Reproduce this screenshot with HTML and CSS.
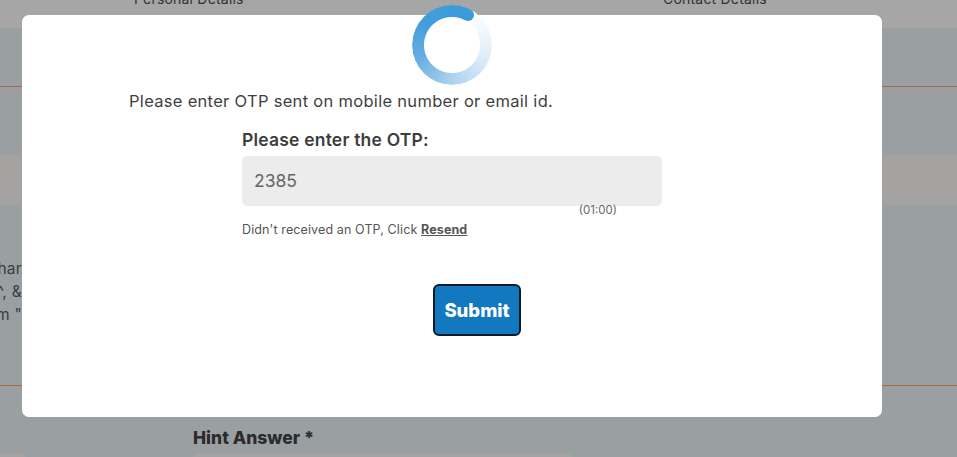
FILE: index.html
```html
<!DOCTYPE html>
<html lang="en">
<head>
<meta charset="utf-8">
<title>OTP verification</title>
<link rel="stylesheet" href="styles.css">
</head>
<body>
<div class="page">
  <div class="tabs">
    <span class="tab tab-personal">Personal Details</span>
    <span class="tab tab-contact">Contact Details</span>
  </div>
  <div class="strip"></div>
  <div class="rule"></div>
  <div class="gap-a"></div>
  <div class="heading-band"></div>
  <div class="notes">
    <p>Password must have at least one char</p>
    <p>special characters such as !, @, #, $, ^, &amp;</p>
    <p>and should be different from "</p>
  </div>
  <div class="rule"></div>
  <div class="bottom">
    <div class="left-field"></div>
    <div class="hint">
      <div class="hint-label">Hint Answer *</div>
      <div class="hint-field"></div>
    </div>
  </div>
</div>

<div class="modal">
  <div class="spinner"><span class="spinner-ring"></span><span class="spinner-cap"></span></div>
  <p class="lead">Please enter OTP sent on mobile number or email id.</p>
  <form class="otp">
    <label class="otp-label" for="otp">Please enter the OTP:</label>
    <input class="otp-input" id="otp" type="text" value="2385">
    <div class="timer">(01:00)</div>
    <p class="resend">Didn't received an OTP, Click <a href="#">Resend</a></p>
    <div class="actions"><button class="submit" type="button">Submit</button></div>
  </form>
</div>
</body>
</html>
```
FILE: styles.css
```css
* { box-sizing: border-box; }
html, body { margin: 0; height: 100%; overflow: hidden; }
body {
  background: #9a9fa2;
  font-family: Inter, "Open Sans", sans-serif;
  color: #3d3d3d;
}
.page { height: 457px; overflow: hidden; }
.tabs {
  height: 28px;
  background: #a6a6a6;
  position: relative;
  font-size: 14px;
  color: #333;
}
.tab { position: absolute; top: -11px; line-height: 20px; letter-spacing: .2px; }
.tab-personal { left: 134px; }
.tab-contact { left: 663px; }
.strip { height: 58px; }
.rule { height: 1px; background: #a7693a; }
.gap-a { height: 68px; }
.heading-band { height: 50px; background: #a4a3a2; }
.notes {
  height: 180px;
  padding-top: 52px;
  margin-left: -328px;
  width: 350px;
  overflow: hidden;
  font-size: 15.5px;
  line-height: 23px;
  letter-spacing: .3px;
  color: #3a3d40;
  white-space: nowrap;
  text-align: right;
}
.notes p { margin: 0; }
.bottom { display: flex; }
.left-field { width: 25px; height: 12px; margin-top: 67px; background: #a4a3a2; border-radius: 0 4px 0 0; }
.hint { margin-left: 168px; padding-top: 41px; }
.hint-label { font-size: 17.5px; font-weight: 800; line-height: 22px; color: #2b2b2d; }
.hint-field { width: 379px; height: 12px; margin-top: 4px; background: #a4a3a2; border-radius: 4px; }

.modal {
  position: absolute;
  left: 22px;
  top: 15px;
  width: 860px;
  height: 402px;
  background: #fff;
  border-radius: 7px;
  padding: 75px 0 0 107px;
}
.spinner { position: absolute; left: 390px; top: -10px; width: 80px; height: 80px; }
.spinner-ring {
  position: absolute;
  inset: 0;
  border-radius: 50%;
  background: conic-gradient(from 28deg, #ffffff 0deg, #f4f9fd 30deg, #dfeef9 80deg, #aed4ef 150deg, #66aee2 220deg, #439edb 280deg, #3b9ad9 360deg);
  -webkit-mask: radial-gradient(circle, transparent 27.5px, #000 28.5px);
  mask: radial-gradient(circle, transparent 27.5px, #000 28.5px);
}
.spinner-cap {
  position: absolute;
  left: 50px;
  top: 4px;
  width: 12px;
  height: 12px;
  border-radius: 50%;
  background: #3b9ad9;
}
.lead { margin: 0; font-size: 16.5px; line-height: 22px; letter-spacing: .3px; color: #3f3f3f; }
.otp { width: 420px; margin: 16px 0 0 113px; position: relative; }
.otp-label { display: block; font-size: 17.5px; font-weight: 600; line-height: 24px; color: #3d3d3d; letter-spacing: .2px; }
.otp-input {
  display: block;
  width: 420px;
  height: 50px;
  margin-top: 4px;
  padding: 0 12px 2px;
  border: 0;
  border-radius: 5px;
  background: #ececec;
  font: 400 17.5px Inter, sans-serif;
  color: #666;
}
.timer {
  position: absolute;
  right: 45px;
  top: 74px;
  font-size: 11.5px;
  line-height: 16px;
  color: #666;
}
.resend { margin: 15px 0 0; font-size: 12.5px; line-height: 18px; color: #555; letter-spacing: .12px; }
.resend a { color: #555; font-weight: 700; }
.actions { display: flex; justify-content: center; margin: 45px 0 0 50px; }
.submit {
  width: 88px;
  height: 52px;
  padding: 0;
  background: #1278bf;
  border: 2px solid #0c1a28;
  border-radius: 6px;
  color: #fff;
  font: 800 18.5px Inter, sans-serif;
}
```
